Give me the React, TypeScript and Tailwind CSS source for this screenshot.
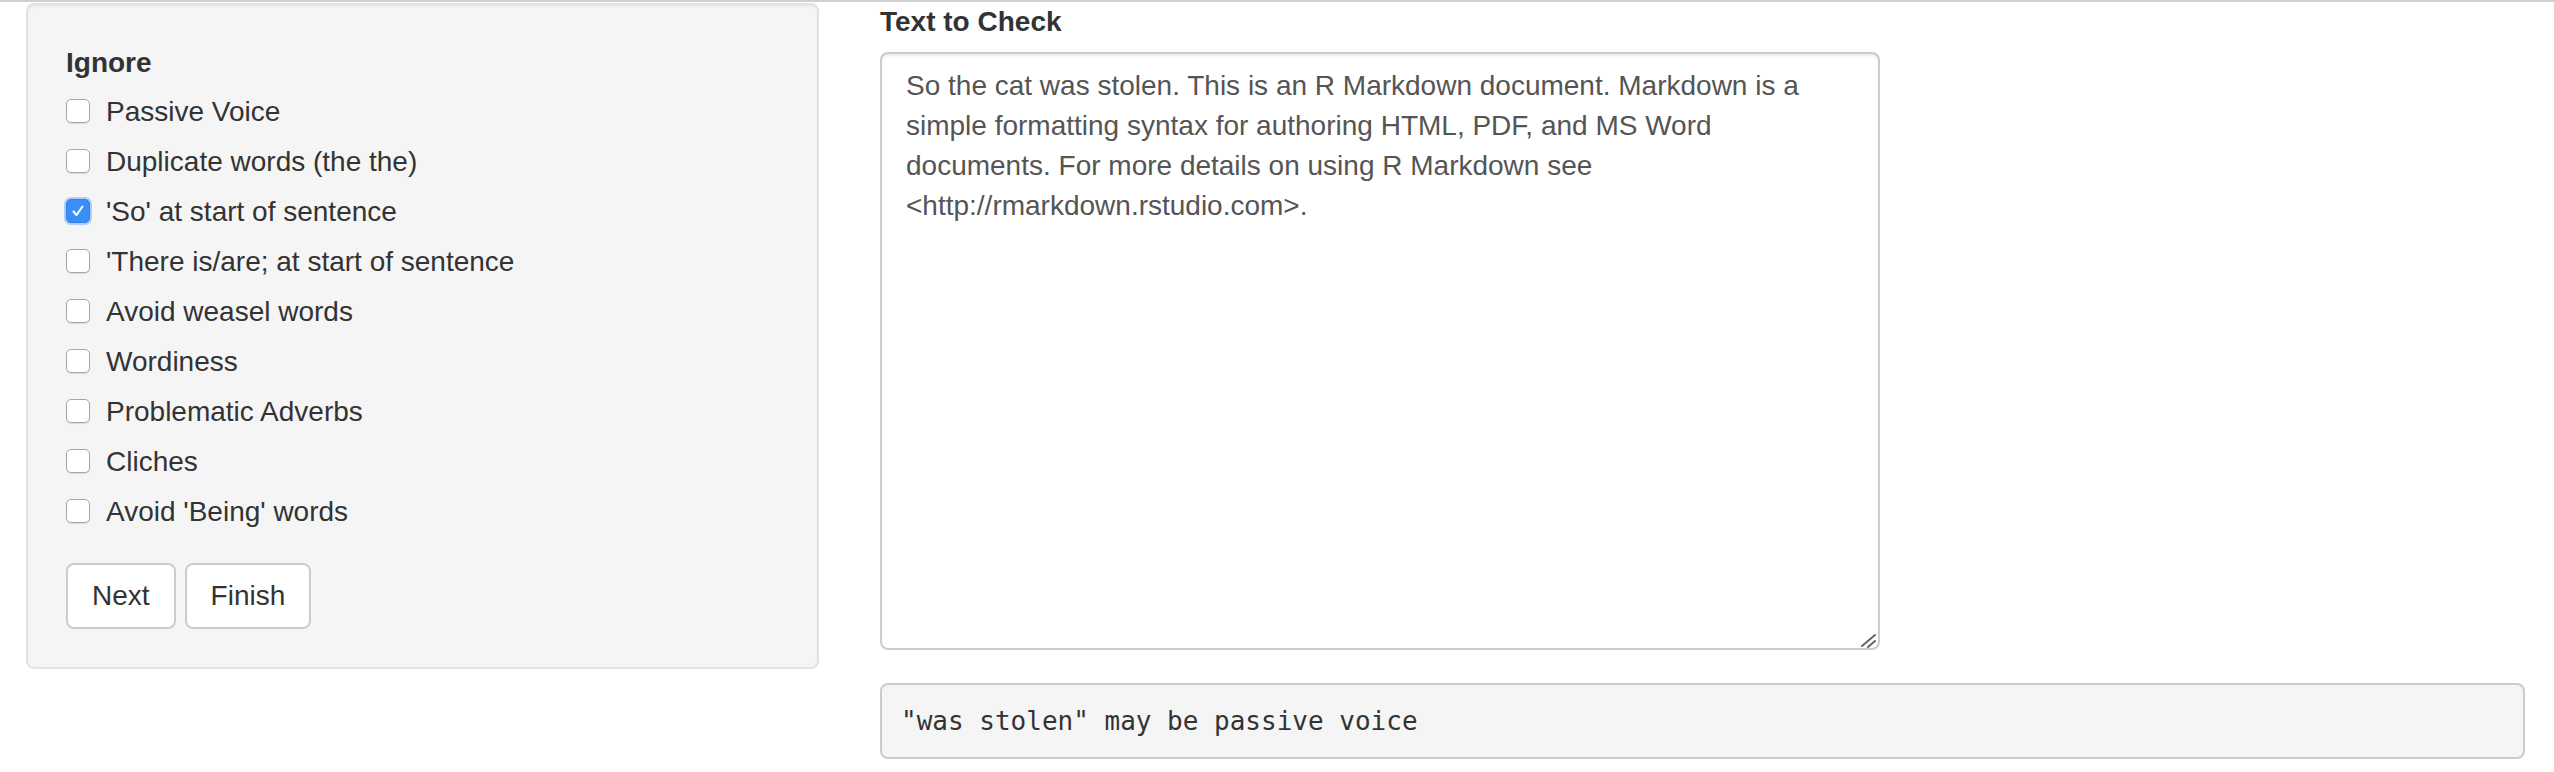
import { useState } from "react";

const OPTIONS = [
  "Passive Voice",
  "Duplicate words (the the)",
  "'So' at start of sentence",
  "'There is/are; at start of sentence",
  "Avoid weasel words",
  "Wordiness",
  "Problematic Adverbs",
  "Cliches",
  "Avoid 'Being' words",
];

const SAMPLE =
  "So the cat was stolen. This is an R Markdown document. Markdown is a simple formatting syntax for authoring HTML, PDF, and MS Word documents. For more details on using R Markdown see <http://rmarkdown.rstudio.com>.";

function Check({ checked, onToggle }: { checked: boolean; onToggle: () => void }) {
  return (
    <span
      role="checkbox"
      aria-checked={checked}
      onClick={onToggle}
      className={
        checked
          ? "mt-[7px] flex h-[24px] w-[24px] shrink-0 items-center justify-center rounded-[5px] border border-[#2f7fe6] bg-[#3a8ef6] shadow-[0_0_0_2px_rgba(90,160,250,0.45)]"
          : "mt-[7px] flex h-[24px] w-[24px] shrink-0 items-center justify-center rounded-[5px] border border-[#a6a6a6] bg-white shadow-[0_1px_1px_rgba(0,0,0,0.1)]"
      }
    >
      {checked && (
        <svg width="14" height="14" viewBox="0 0 14 14" fill="none">
          <path
            d="M2.5 7.5 L5.5 11 L11.5 2.5"
            stroke="#fff"
            strokeWidth="2"
            strokeLinecap="round"
            strokeLinejoin="round"
          />
        </svg>
      )}
    </span>
  );
}

export default function App() {
  const [checked, setChecked] = useState<string[]>(["'So' at start of sentence"]);
  const [text, setText] = useState(SAMPLE);

  const toggle = (o: string) =>
    setChecked((prev) => (prev.includes(o) ? prev.filter((x) => x !== o) : [...prev, o]));

  return (
    <div
      className="flex h-[772px] w-full overflow-hidden border-t-2 border-[#cfcfcf] bg-white text-[#333]"
      style={{ fontFamily: '"Liberation Sans", Arial, sans-serif' }}
    >
      <div className="w-[819px] shrink-0 pl-[26px] pt-[1px]">
        <div className="rounded-lg border-2 border-[#e3e3e3] bg-[#f5f5f5] p-[38px] shadow-[inset_0_2px_2px_rgba(0,0,0,0.05)]">
          <div className="text-[28px] leading-[40px] font-bold">Ignore</div>
          <div className="mt-[9px] flex flex-col gap-[10px]">
            {OPTIONS.map((o) => (
              <label key={o} className="flex h-[40px] cursor-pointer items-start">
                <Check checked={checked.includes(o)} onToggle={() => toggle(o)} />
                <span className="ml-[16px] text-[28px] leading-[40px]">{o}</span>
              </label>
            ))}
          </div>
          <div className="mt-[31px] flex gap-[9px]">
            <button
              type="button"
              className="h-[66px] rounded-lg border-2 border-[#ccc] bg-white px-[24px] text-[28px] leading-[40px] text-[#333]"
            >
              Next
            </button>
            <button
              type="button"
              className="h-[66px] rounded-lg border-2 border-[#ccc] bg-white px-[24px] text-[28px] leading-[40px] text-[#333]"
            >
              Finish
            </button>
          </div>
        </div>
      </div>

      <div className="ml-[61px] w-[1645px] shrink-0">
        <div className="text-[28px] leading-[40px] font-bold">Text to Check</div>
        <div className="relative mt-[10px] w-[1000px]">
          <textarea
            value={text}
            onChange={(e) => setText(e.target.value)}
            className="block h-[598px] w-[1000px] resize-none rounded-lg border-2 border-[#ccc] bg-white px-[24px] py-[12px] text-[28px] leading-[40px] text-[#555] shadow-[inset_0_2px_2px_rgba(0,0,0,0.075)] outline-none"
            style={{ fontFamily: '"Liberation Sans", Arial, sans-serif' }}
          />
          {/* resize grip */}
          <svg
            className="pointer-events-none absolute right-[3px] bottom-[2px]"
            width="16"
            height="16"
            viewBox="0 0 16 16"
          >
            <path d="M1 14 L14 3 M7 15 L14 9" stroke="#666" strokeWidth="2" strokeLinecap="round" />
          </svg>
        </div>
        <pre
          className="mt-[33px] flex h-[76px] w-[1645px] items-center rounded-lg border-2 border-[#ccc] bg-[#f5f5f5] px-[19px] text-[26px] text-[#333]"
          style={{ fontFamily: '"DejaVu Sans Mono", "Liberation Mono", monospace' }}
        >
          "was stolen" may be passive voice
        </pre>
      </div>
    </div>
  );
}
